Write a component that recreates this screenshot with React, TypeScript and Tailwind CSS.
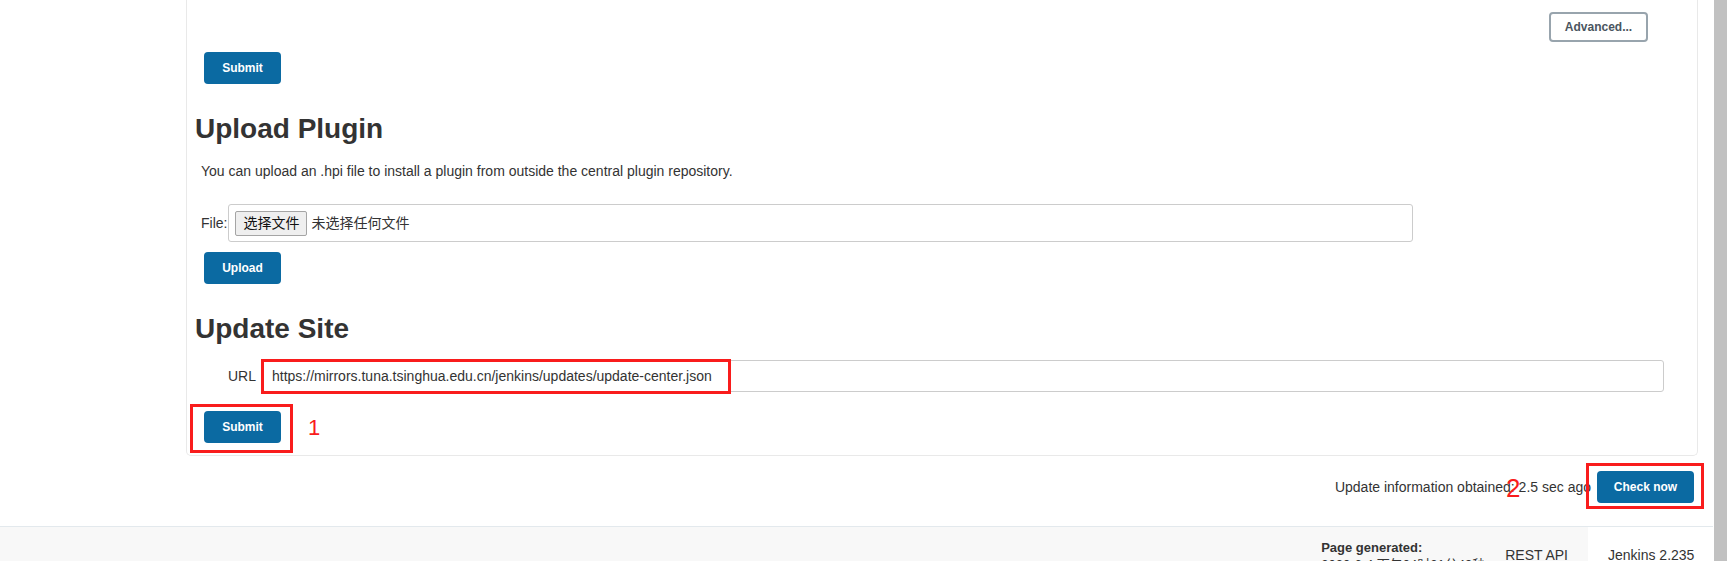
const font = "font-['Liberation_Sans','Noto_Sans_CJK_SC',sans-serif]";

function BlueButton({ label, className = "" }: { label: string; className?: string }) {
  return (
    <button
      type="button"
      className={`h-[32px] rounded-[4px] bg-[#0b6aa2] text-[12px] font-bold text-white ${className}`}
    >
      {label}
    </button>
  );
}

function Heading({ children }: { children: string }) {
  return <h2 className="text-[28px] font-bold leading-[34px] text-[#333]">{children}</h2>;
}

export default function App() {
  return (
    <div className={`flex h-[561px] overflow-hidden bg-white text-[#333] ${font}`}>
      <div className="flex min-w-0 flex-1 flex-col">
        <div className="flex">
          <aside className="w-[186px] shrink-0" />

          <main className="min-w-0 flex-1 pr-[15px]">
            <section className="rounded-b-[5px] border-x border-b border-[#e9e9e9] pb-[12px] pl-[8px] pr-[8px] pt-[12px]">
              <div className="mr-[41px] flex justify-end">
                <button
                  type="button"
                  className="h-[30px] w-[99px] rounded-[4px] border-2 border-[#98a4ad] bg-white text-[12px] font-bold text-[#4a5560]"
                >
                  Advanced...
                </button>
              </div>

              <BlueButton label="Submit" className="ml-[9px] mt-[10px] w-[77px]" />

              <div className="mt-[28px]">
                <Heading>Upload Plugin</Heading>
              </div>
              <p className="ml-[6px] mt-[15px] text-[14px] leading-[20px]">
                You can upload an .hpi file to install a plugin from outside the central plugin repository.
              </p>

              <div className="ml-[6px] mt-[23px] flex items-center gap-[1px] text-[14px]">
                <span>File:</span>
                <div className="flex h-[38px] w-[1185px] items-center rounded-[3px] border border-[#ccc] px-[6px]">
                  <span className="flex h-[25px] w-[72px] items-center justify-center rounded-[2px] border border-[#a5a5a5] bg-[#efefef] text-[#111]">
                    选择文件
                  </span>
                  <span className="ml-[4px]">未选择任何文件</span>
                </div>
              </div>

              <BlueButton label="Upload" className="ml-[9px] mt-[10px] w-[77px]" />

              <div className="mt-[28px]">
                <Heading>Update Site</Heading>
              </div>

              <div className="ml-[6px] mr-[25px] mt-[14px] flex items-center gap-[6px] text-[14px]">
                <span className="w-[55px] text-right">URL</span>
                <div className="relative flex h-[32px] flex-1 items-center rounded-[3px] border border-[#ccc] px-[9px]">
                  https://mirrors.tuna.tsinghua.edu.cn/jenkins/updates/update-center.json
                  <span className="absolute -left-[2px] -top-[2px] h-[35px] w-[470px] border-[3px] border-[#f91c1c]" />
                </div>
              </div>

              <div className="relative ml-[9px] mt-[19px] w-[77px]">
                <BlueButton label="Submit" className="block w-[77px]" />
                <span className="absolute -bottom-[10px] -left-[14px] -right-[12px] -top-[7px] border-[3px] border-[#f91c1c]" />
                <span className="absolute left-[104px] top-[6px] text-[22px] leading-none text-[#f91c1c]">1</span>
              </div>
            </section>

            <div className="mb-[23px] mt-[15px] flex items-center justify-end gap-[6px] pr-[4px]">
              <span className="relative whitespace-nowrap text-[14px] leading-[20px]">
                Update information obtained: 2.5 sec ago
                <span className="absolute -top-[2px] left-[171px] text-[26px] leading-none text-[#f91c1c]">2</span>
              </span>
              <div className="relative">
                <BlueButton label="Check now" className="block w-[97px]" />
                <span className="absolute -bottom-[6px] -left-[11px] -right-[10px] -top-[8px] border-[3px] border-[#f91c1c]" />
              </div>
            </div>
          </main>
        </div>

        <footer className="flex h-[58px] shrink-0 justify-end whitespace-nowrap border-t border-[#e3e9ed] bg-[#f8f8f8]">
          <div className="flex shrink-0 flex-col justify-center pl-[20px] text-[13px] leading-[17px]">
            <span className="font-bold">Page generated:</span>
            <span>2020-6-4 下午04时21分49秒</span>
          </div>
          <div className="flex shrink-0 items-center px-[20px] text-[14px]">REST API</div>
          <div className="flex w-[125px] shrink-0 items-center bg-white px-[20px] text-[14px]">Jenkins 2.235</div>
        </footer>
      </div>

      <div className="w-[17px] shrink-0 pl-[1px] pr-[3px]">
        <div className="h-full bg-[#c1c1c1]" />
      </div>
    </div>
  );
}
